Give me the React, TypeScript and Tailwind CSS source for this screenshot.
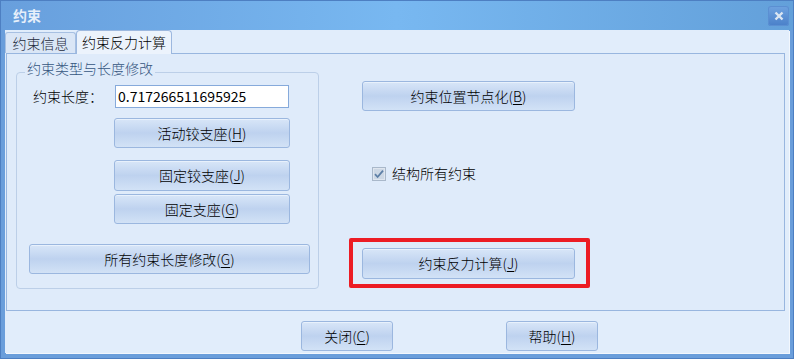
import React from "react";

const FONT = "[font-family:'Noto_Sans_CJK_SC','Noto_Sans',sans-serif]";

function Mn({ text, k }: { text: string; k: string }) {
  return (
    <span>
      {text}(<span className="underline underline-offset-2">{k}</span>)
    </span>
  );
}

function Btn({
  className,
  children,
}: {
  className: string;
  children: React.ReactNode;
}) {
  return (
    <div
      className={`flex items-center justify-center rounded-[3px] border border-[#9bb7df] bg-gradient-to-b from-[#d8e6f8] via-[#bed2ef] to-[#d2e2f6] text-[14px] font-light text-black shadow-[inset_0_1px_0_#e8f1fc] ${className}`}
    >
      {children}
    </div>
  );
}

function CheckBox() {
  return (
    <svg width="16" height="16" viewBox="0 0 16 16" className="shrink-0">
      <rect x="1.5" y="1.5" width="13" height="13" fill="#dfe6ef" stroke="#a9b8ca" />
      <rect x="3" y="3" width="10" height="10" fill="#cdd8e5" />
      <path d="M4 8.2 L6.6 11 L12 4.6" fill="none" stroke="#5d7fa6" strokeWidth="1.8" />
    </svg>
  );
}

export default function App() {
  return (
    <div
      className={`flex h-[359px] w-[794px] flex-col border border-[#4d7fc2] bg-[#6a9edb] px-[4px] pb-[5px] ${FONT}`}
    >
      {/* title bar */}
      <div className="-mx-[4px] flex h-[29px] shrink-0 items-center justify-between bg-gradient-to-r from-[#689fdd] via-[#78b8f1] to-[#63a0da] pl-[12px] pr-[4px]">
        <span className="text-[14px] font-bold text-[#e6effa]">约束</span>
        <div className="flex h-[20px] w-[21px] items-center justify-center rounded-[3px] bg-gradient-to-b from-[#6fa3e0] to-[#4a80c9] shadow-[inset_0_0_0_1px_#5b8fd2]">
          <svg width="10" height="10" viewBox="0 0 10 10">
            <path d="M1.5 1.5 L8.5 8.5 M8.5 1.5 L1.5 8.5" stroke="#dbe6f3" strokeWidth="2.4" />
          </svg>
        </div>
      </div>

      {/* content */}
      <div className="flex flex-1 flex-col bg-[#e1edfb] shadow-[1px_1px_0_#f2f7fd]">
        {/* tabs */}
        <div className="flex h-[23px] shrink-0 items-end text-[14px] font-light">
          <div className="flex h-[21px] w-[71px] items-center justify-center rounded-t-[3px] border border-b-0 border-[#a7c0e2] bg-[#dae6f6] text-[#1c2a3c]">
            约束信息
          </div>
          <div className="relative z-10 -mb-px flex h-[24px] w-[96px] items-center justify-center rounded-t-[4px] border border-b-0 border-[#9cb8df] bg-[#ecf3fc] text-black">
            约束反力计算
          </div>
        </div>

        {/* panel */}
        <div className="ml-[1px] mr-[4px] flex h-[258px] shrink-0 border border-[#98b6df] bg-[#dfebfa] pl-[9px] pt-[17px]">
          {/* group box */}
          <div className="relative mt-[1px] flex h-[217px] w-[303px] flex-col rounded-[4px] border border-[#bccfe8] pl-[16px] pt-[12px]">
            <span className="absolute -top-[12px] left-[8px] bg-[#dfebfa] px-[2px] text-[14px] font-light leading-[15px] text-[#34557e]">
              约束类型与长度修改
            </span>
            <div className="flex items-center">
              <span className="w-[82px] text-[14px] font-light text-black">约束长度：</span>
              <div className="flex h-[23px] w-[174px] items-center border border-[#86aadb] bg-white pl-[2px] text-[14px] text-black">
                0.717266511695925
              </div>
            </div>
            <Btn className="ml-[81px] mt-[10px] h-[30px] w-[176px]">
              <Mn text="活动铰支座" k="H" />
            </Btn>
            <Btn className="ml-[81px] mt-[12px] h-[31px] w-[176px]">
              <Mn text="固定铰支座" k="J" />
            </Btn>
            <Btn className="ml-[81px] mt-[3px] h-[30px] w-[176px]">
              <Mn text="固定支座" k="G" />
            </Btn>
            <Btn className="-ml-[4px] mt-[20px] h-[30px] w-[281px]">
              <Mn text="所有约束长度修改" k="G" />
            </Btn>
          </div>

          {/* right column */}
          <div className="ml-[30px] flex flex-col">
            <Btn className="ml-[13px] mt-[10px] h-[30px] w-[213px]">
              <Mn text="约束位置节点化" k="B" />
            </Btn>
            <div className="ml-[22px] mt-[52px] flex items-center gap-[5px] text-[14px] font-light text-black">
              <CheckBox />
              <span>结构所有约束</span>
            </div>
            <div className="mt-[54px] flex h-[50px] w-[241px] items-center rounded-[2px] border-[4px] border-[#ec1c24] pl-[9px]">
              <Btn className="h-[31px] w-[213px]">
                <Mn text="约束反力计算" k="J" />
              </Btn>
            </div>
          </div>
        </div>

        {/* bottom buttons */}
        <div className="flex pl-[296px] pt-[10px]">
          <Btn className="h-[30px] w-[92px]">
            <Mn text="关闭" k="C" />
          </Btn>
          <Btn className="ml-[113px] h-[30px] w-[92px]">
            <Mn text="帮助" k="H" />
          </Btn>
        </div>
      </div>
    </div>
  );
}
